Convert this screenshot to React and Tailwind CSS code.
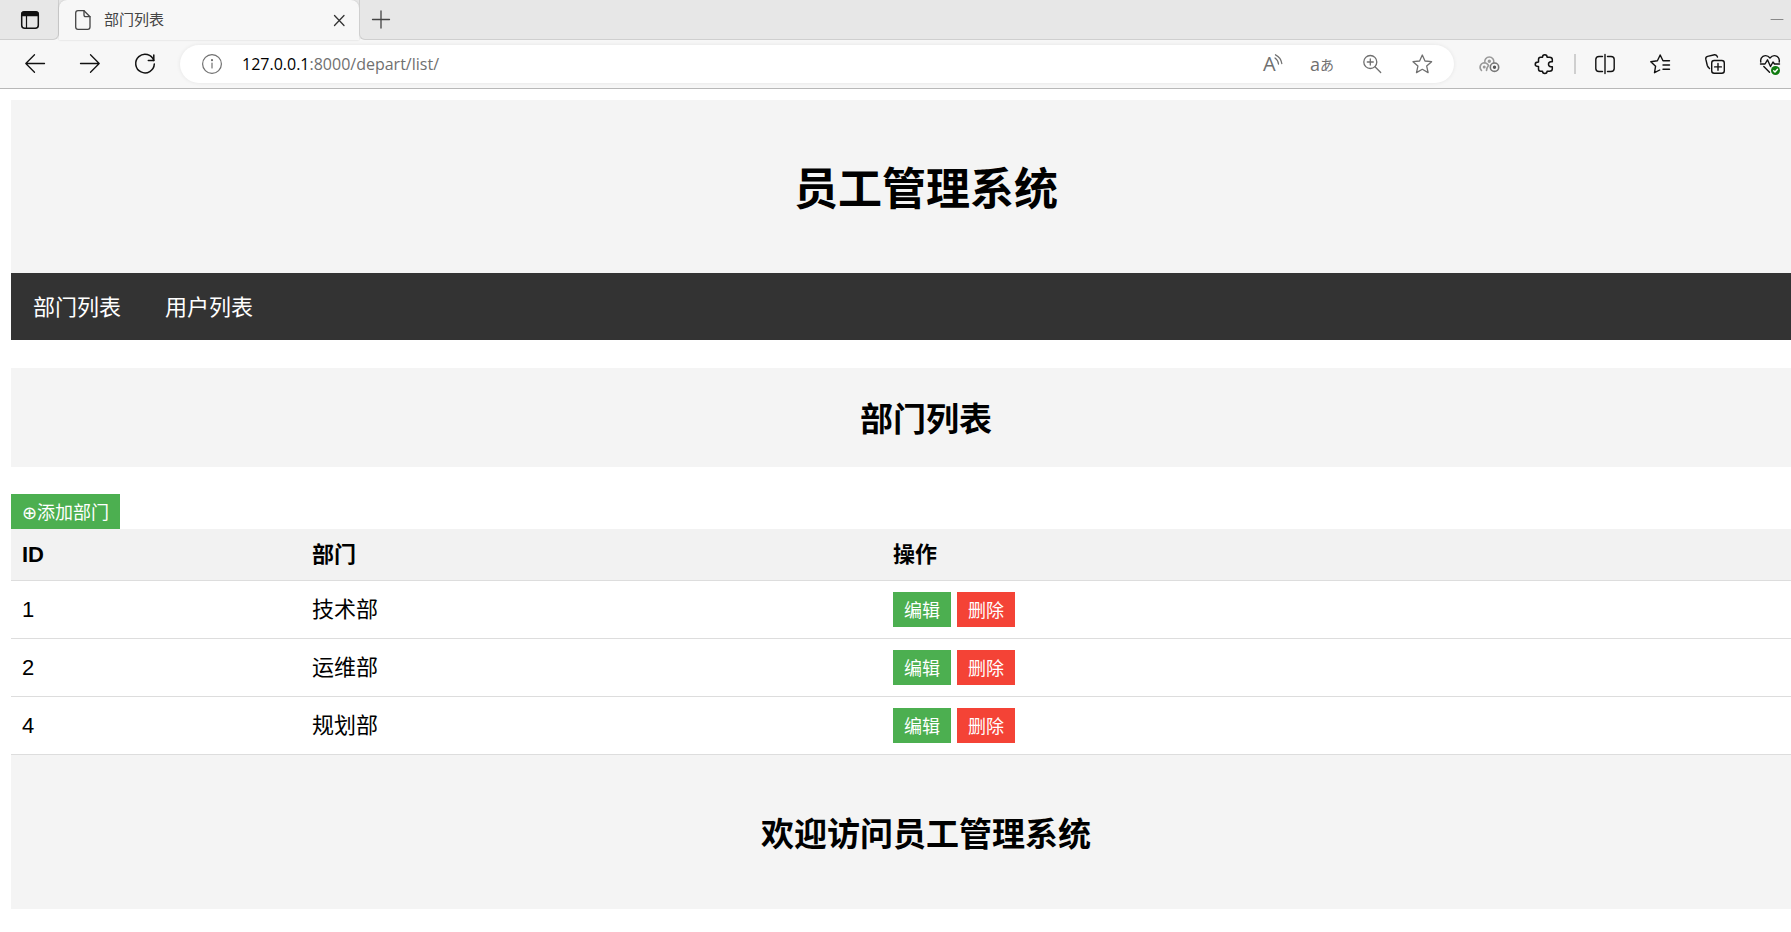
import React, { useState } from "react";

const initialDeparts = [
  { id: 1, name: "技术部" },
  { id: 2, name: "运维部" },
  { id: 4, name: "规划部" },
];

function Icon({ children, className = "", width = "1.3" }) {
  return (
    <svg
      viewBox="0 0 20 20"
      className={`h-5 w-5 shrink-0 overflow-visible ${className}`}
      fill="none"
      stroke="currentColor"
      strokeWidth={width}
      strokeLinecap="round"
      strokeLinejoin="round"
      aria-hidden="true"
    >
      {children}
    </svg>
  );
}

function IconButton({ label, children }) {
  return (
    <button type="button" aria-label={label} className="flex h-5 w-5 shrink-0 items-center justify-center">
      {children}
    </button>
  );
}

function TabStrip() {
  return (
    <div className="flex h-10 bg-[#f7f7f7]">
      <div className="flex w-[59px] shrink-0 items-center rounded-br-md border-r border-b border-[#cfcfcf] bg-[#e7e7e7] pl-5">
        <IconButton label="Tab actions">
          <Icon className="text-[#111]" width="1.5">
            <rect x="1.7" y="1.7" width="16.6" height="16.6" rx="3" />
            <path d="M2 3.5Q2 2 4 2H16Q18 2 18 3.5V5.5H2Z" fill="currentColor" />
            <path d="M6.5 6V18" strokeWidth="1.2" />
          </Icon>
        </IconButton>
      </div>

      <div className="w-[300px] shrink-0 bg-[#e7e7e7]">
        <div className="flex h-full items-center rounded-t-lg bg-[#f7f7f7] pr-[10px] pl-[14px] shadow-[0_0_2px_rgba(0,0,0,0.18)]">
          <Icon className="text-[#444]">
            <path d="M5 .7H11L17 6.7V17Q17 19.3 14.7 19.3H5Q2.7 19.3 2.7 17V3Q2.7 .7 5 .7Z" />
            <path d="M11 .7V5Q11 6.7 12.7 6.7H17" />
          </Icon>
          <span className="ml-[11px] flex-1 text-[15px] leading-5 text-[#444]">部门列表</span>
          <IconButton label="Close tab">
            <Icon className="text-[#333]">
              <path d="M5.5 5.5L15 15.5M15 5.5L5.5 15.5" />
            </Icon>
          </IconButton>
        </div>
      </div>

      <div className="flex flex-1 items-center justify-between rounded-bl-md border-b border-l border-[#cfcfcf] bg-[#e7e7e7] pr-1 pl-[11px]">
        <IconButton label="New tab">
          <Icon className="text-[#444]">
            <path d="M1.5 9.5H18.5M10 1V18" />
          </Icon>
        </IconButton>
        <IconButton label="Minimize">
          <Icon className="text-[#888]" width="1">
            <path d="M4 9.5H16" />
          </Icon>
        </IconButton>
      </div>
    </div>
  );
}

function AddressBar() {
  return (
    <div className="flex h-[38px] flex-1 items-center rounded-full bg-white pr-[22px] pl-[22px] text-[#707070] shadow-[0_0_4px_rgba(0,0,0,0.08)]">
      <IconButton label="Site information">
        <Icon width="1.2">
          <circle cx="10" cy="10" r="9.4" />
          <path d="M10 9V14" />
          <circle cx="10" cy="6.2" r=".5" fill="currentColor" />
        </Icon>
      </IconButton>
      <div
        role="textbox"
        aria-label="Address"
        contentEditable
        suppressContentEditableWarning
        className="ml-5 flex-1 font-['Open_Sans','Noto_Sans',sans-serif] text-[16px] leading-5 outline-none"
      >
        <span className="text-black">127.0.0.1</span>:8000/depart/list/
      </div>
      <div className="flex items-center gap-[30px]">
        <IconButton label="Read aloud">
          <Icon width="1.3">
            <text
              x="1"
              y="17"
              fill="currentColor"
              stroke="none"
              className="font-['Open_Sans',sans-serif] text-[20px]"
            >
              A
            </text>
            <path d="M13 4Q16 6 16.5 10M13.5 .8Q19 3.5 19.8 9.5" />
          </Icon>
        </IconButton>
        <IconButton label="Translate">
          <span className="font-['Open_Sans',sans-serif] text-[18px] leading-5">a</span>
          <span className="font-['Noto_Sans_CJK_JP',sans-serif] text-[14px] leading-5">あ</span>
        </IconButton>
        <IconButton label="Zoom">
          <Icon>
            <circle cx="8.3" cy="8" r="6.5" />
            <path d="M13 12.7L18.7 18.5M5.3 8H11.3M8.3 5V11" />
          </Icon>
        </IconButton>
        <IconButton label="Add to favorites">
          <Icon>
            <path d="M10.3 1L13 7L19.6 7.7L14.7 12.1L16.1 18.6L10.3 15.3L4.5 18.6L5.9 12.1L1 7.7L7.6 7Z" />
          </Icon>
        </IconButton>
      </div>
    </div>
  );
}

function Toolbar() {
  return (
    <div className="flex h-[49px] items-center border-b border-[#b8b8b8] bg-[#f7f7f7] pr-[11px] pl-[25px] text-[#111]">
      <div className="flex gap-[35px]">
        <IconButton label="Back">
          <Icon>
            <path d="M19.5 9.5H.8M9.5 .8L.8 9.5L9.5 18.2" />
          </Icon>
        </IconButton>
        <IconButton label="Forward">
          <Icon>
            <path d="M.5 9.5H19.2M10.5 .8L19.2 9.5L10.5 18.2" />
          </Icon>
        </IconButton>
        <IconButton label="Refresh">
          <Icon width="1.5">
            <path d="M18.8 6.5A9.3 9.3 0 1 0 19.3 10" />
            <path d="M18.8 1V6.5H13.3" />
          </Icon>
        </IconButton>
      </div>

      <div className="ml-[25px] flex flex-1">
        <AddressBar />
      </div>

      <div className="ml-[25px] flex gap-[35px]">
        <IconButton label="Network extension">
          <Icon className="text-[#999]" width="1.6">
            <path d="M5.8 8.5A4.6 4.6 0 1 1 14.8 8.5" />
            <path d="M2.5 16.5A4.5 4.5 0 0 1 5 8.8Q8 8.8 9.5 11.5Q7.5 14 7.5 16.5" />
            <circle cx="15.5" cy="13.2" r="4.2" className="text-[#777]" stroke="currentColor" />
            <circle cx="10.3" cy="7.2" r=".9" fill="currentColor" />
            <circle cx="5.2" cy="13" r=".7" fill="currentColor" />
            <circle cx="15.5" cy="13.2" r=".9" className="text-[#555]" fill="currentColor" stroke="currentColor" />
          </Icon>
        </IconButton>
        <IconButton label="Extensions">
          <Icon width="1.5">
            <path d="M4.5 5.5Q4.5 3.2 6.5 3.2H8.5Q8.5 .8 10.8 .8Q13.1 .8 13.1 3.2H15.5Q18.3 3.2 18.3 5.5V7.8H17Q14.5 8 14.5 10.2Q14.5 12.5 17 12.7H18.3V15Q18.3 17.2 15.5 17.2H13.1Q13.1 19.4 10.8 19.4Q8.5 19.4 8.5 17.2H6.5Q4.5 17.2 4.5 15V12.6Q1.2 12.6 1.2 10.2Q1.2 7.9 4.5 7.9Z" />
          </Icon>
        </IconButton>
      </div>
      <div className="mr-[19px] ml-5 h-5 w-[2px] bg-[#cfcfcf]" />
      <div className="flex gap-[35px]">
        <IconButton label="Split screen">
          <Icon width="1.4">
            <path d="M7.5 2.5H4Q.8 2.5 .8 5.5V14.5Q.8 17.5 4 17.5H7.5M12.5 2.5H16Q19.2 2.5 19.2 5.5V14.5Q19.2 17.5 16 17.5H12.5M10 .5V19.5" />
          </Icon>
        </IconButton>
        <IconButton label="Favorites">
          <Icon width="1.4">
            <path d="M19.5 6.8H13L10.2 1L7.4 6.8L.8 7.7L5.6 12.2L4.5 18.7L9.7 16" />
            <path d="M13 11H19.5M13 15.2H19.5" />
          </Icon>
        </IconButton>
        <IconButton label="Collections">
          <Icon width="1.4">
            <rect x="6.7" y="6.5" width="12.6" height="12.8" rx="2.5" />
            <path d="M13 9.5V16.3M9.6 12.9H16.4" />
            <path d="M4.5 14.5Q2.8 13 2.3 11.5L.8 5.2Q.4 3 2.6 2.4L9.5 .8Q11.7 .5 12.5 3" />
          </Icon>
        </IconButton>
        <IconButton label="Browser essentials">
          <Icon width="1.4">
            <path d="M.8 8Q0 4.5 3 2.3Q7 .3 10 4Q13 .3 17 2.3Q20 4.5 19.2 8" />
            <path d="M.5 10H5L7.5 5.8L10.5 12.5L13 8L14.5 10H19.5" />
            <path d="M3.8 12.5L9.5 18.2" />
            <circle cx="15.5" cy="16.5" r="4.5" fill="#107c10" stroke="none" />
            <path d="M13.7 16.7L15 18L17.5 15.2" stroke="#fff" />
          </Icon>
        </IconButton>
      </div>
    </div>
  );
}

function NavBar() {
  return (
    <nav className="flex bg-[#333] text-[22px] leading-[31px] text-white">
      <a href="#depart" className="px-[22px] pt-[19px] pb-[17px]">
        部门列表
      </a>
      <a href="#user" className="px-[22px] pt-[19px] pb-[17px]">
        用户列表
      </a>
    </nav>
  );
}

function DepartTable({ departs, onDelete }) {
  return (
    <table className="w-full table-fixed border-collapse text-left text-[22px] leading-[29px]">
      <thead>
        <tr className="border-b border-[#ddd] bg-[#f2f2f2]">
          <th className="w-[290px] p-[11px]">ID</th>
          <th className="w-[581px] p-[11px]">部门</th>
          <th className="p-[11px]">操作</th>
        </tr>
      </thead>
      <tbody>
        {departs.map((depart) => (
          <tr key={depart.id} className="border-b border-[#ddd]">
            <td className="p-[11px]">{depart.id}</td>
            <td className="p-[11px]">{depart.name}</td>
            <td className="p-[11px]">
              <div className="flex gap-[6px] text-[18px] leading-[25px] text-white">
                <button type="button" className="bg-[#4caf50] px-[11px] pt-[7px] pb-[3px]">
                  编辑
                </button>
                <button
                  type="button"
                  onClick={() => onDelete(depart.id)}
                  className="bg-[#f44336] px-[11px] pt-[7px] pb-[3px]"
                >
                  删除
                </button>
              </div>
            </td>
          </tr>
        ))}
      </tbody>
    </table>
  );
}

function App() {
  const [departs, setDeparts] = useState(initialDeparts);

  const handleDelete = (id) => {
    setDeparts(departs.filter((depart) => depart.id !== id));
  };

  return (
    <div className="min-h-screen overflow-x-hidden bg-white font-['Liberation_Sans','Noto_Sans_CJK_SC',sans-serif] text-black">
      <TabStrip />
      <Toolbar />

      {/* page content runs wider than the window */}
      <div className="-mr-[50px] pt-[11px] pl-[11px]">
        <header className="bg-[#f4f4f4] pt-[60px] pb-[53px] text-center">
          <h1 className="text-[44px] leading-[60px] font-bold">员工管理系统</h1>
        </header>
        <NavBar />

        <div className="mt-7 bg-[#f4f4f4] pt-[29px] pb-[25px] text-center">
          <h2 className="text-[33px] leading-[45px] font-bold">部门列表</h2>
        </div>

        <div className="mt-[27px] flex">
          <a
            href="#add"
            className="bg-[#4caf50] px-[11px] pt-[7px] pb-[3px] text-[18px] leading-[25px] text-white"
          >
            <span className="font-['DejaVu_Sans',sans-serif] leading-none">⊕</span>添加部门
          </a>
        </div>
        <DepartTable departs={departs} onDelete={handleDelete} />

        <footer className="bg-[#f4f4f4] pt-[57px] pb-[52px] text-center">
          <h2 className="text-[33px] leading-[45px] font-bold">欢迎访问员工管理系统</h2>
        </footer>
      </div>
    </div>
  );
}

export default App;
